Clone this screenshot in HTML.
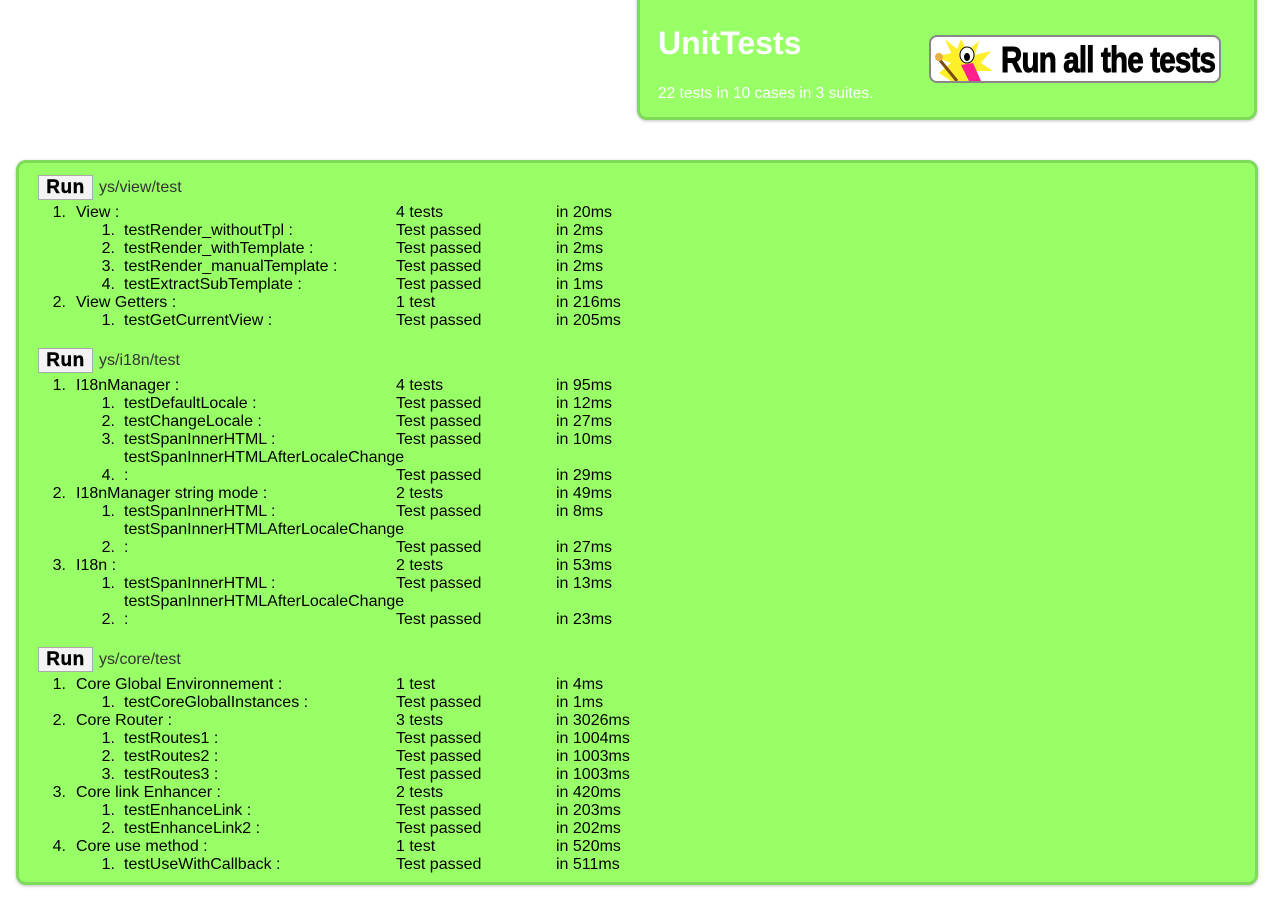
<!DOCTYPE html>
<html><head><meta charset="utf-8"><style>
body{margin:0;width:1273px;height:898px;background:#fff;font-family:"Liberation Sans",sans-serif;position:relative;overflow:hidden;color:#000}
.hdr{position:absolute;left:637px;top:-12px;width:614px;height:126px;background:#99ff66;border:3px solid #7fd95a;border-radius:10px;box-shadow:0 1px 3px rgba(0,0,0,.25)}
.hdr h1{position:absolute;left:18px;top:34px;margin:0;color:#fff;font-size:32px;font-weight:bold}
.hdr .s{position:absolute;left:18px;top:94px;color:#fff;font-size:15.5px}
.btn{position:absolute;left:929px;top:35px;width:288px;height:44px;background:#fff;border:2px solid #888;border-radius:8px;overflow:hidden}
.btn .t{position:absolute;left:70px;top:2px;font-size:36px;font-weight:bold;font-family:"Liberation Sans Narrow","Liberation Sans",sans-serif;transform:scaleX(.82);transform-origin:left;letter-spacing:-1px;white-space:nowrap;-webkit-text-stroke:1px #000}
.main{position:absolute;left:16px;top:160px;width:1236px;height:719px;background:#99ff66;border:3px solid #7fd95a;border-radius:10px;box-shadow:0 1px 3px rgba(0,0,0,.25)}
.run{position:absolute;left:38px;width:53px;height:23px;background:#f3f3f3;border:1px solid #aaa;font-weight:bold;font-size:19px;text-align:center;line-height:24px;letter-spacing:0.5px;-webkit-text-stroke:0.4px #000}
.p{position:absolute;left:99px;font-size:16px;color:#333;line-height:26px}
.r{position:absolute;left:0;height:18px;line-height:18px;font-size:16px;white-space:nowrap;width:800px}
.r span{position:absolute}
.n1{left:40px;width:26px;text-align:right}.t1{left:76px}
.n2{left:89px;width:26px;text-align:right}.t2{left:124px}
.c2{left:396px}.c3{left:556px}
</style></head><body>
<div class="hdr"><h1>UnitTests</h1><div class="s">22 tests in 10 cases in 3 suites.</div></div>
<div class="btn">
<svg width="70" height="44" style="position:absolute;left:0;top:0"><polygon points="30,2 36,14 48,4 44,18 60,14 50,26 62,34 46,34 40,44 20,44 8,36 20,26 4,20 20,16 14,2 26,12" fill="#ffef2a"/><line x1="8" y1="22" x2="26" y2="44" stroke="#7a4a10" stroke-width="3"/><circle cx="8" cy="20" r="4" fill="#e8b040"/><path d="M30 28 L38 44 L50 44 L42 26Z" fill="#ff1e8c"/><ellipse cx="36" cy="18" rx="7" ry="8" fill="#fff" stroke="#000"/><ellipse cx="36" cy="20" rx="3" ry="4" fill="#000"/></svg>
<div class="t">Run all the tests</div></div>
<div class="main"></div>

<div class="run" style="top:175px">Run</div><div class="p" style="top:175px">ys/view/test</div>
<div class="r" style="top:204px"><span class="n1">1.</span><span class="t1">View :</span><span class="c2">4 tests</span><span class="c3">in 20ms</span></div>
<div class="r" style="top:222px"><span class="n2">1.</span><span class="t2">testRender_withoutTpl :</span><span class="c2">Test passed</span><span class="c3">in 2ms</span></div>
<div class="r" style="top:240px"><span class="n2">2.</span><span class="t2">testRender_withTemplate :</span><span class="c2">Test passed</span><span class="c3">in 2ms</span></div>
<div class="r" style="top:258px"><span class="n2">3.</span><span class="t2">testRender_manualTemplate :</span><span class="c2">Test passed</span><span class="c3">in 2ms</span></div>
<div class="r" style="top:276px"><span class="n2">4.</span><span class="t2">testExtractSubTemplate :</span><span class="c2">Test passed</span><span class="c3">in 1ms</span></div>
<div class="r" style="top:294px"><span class="n1">2.</span><span class="t1">View Getters :</span><span class="c2">1 test</span><span class="c3">in 216ms</span></div>
<div class="r" style="top:312px"><span class="n2">1.</span><span class="t2">testGetCurrentView :</span><span class="c2">Test passed</span><span class="c3">in 205ms</span></div>

<div class="run" style="top:348px">Run</div><div class="p" style="top:348px">ys/i18n/test</div>
<div class="r" style="top:377px"><span class="n1">1.</span><span class="t1">I18nManager :</span><span class="c2">4 tests</span><span class="c3">in 95ms</span></div>
<div class="r" style="top:395px"><span class="n2">1.</span><span class="t2">testDefaultLocale :</span><span class="c2">Test passed</span><span class="c3">in 12ms</span></div>
<div class="r" style="top:413px"><span class="n2">2.</span><span class="t2">testChangeLocale :</span><span class="c2">Test passed</span><span class="c3">in 27ms</span></div>
<div class="r" style="top:431px"><span class="n2">3.</span><span class="t2">testSpanInnerHTML :</span><span class="c2">Test passed</span><span class="c3">in 10ms</span></div>
<div class="r" style="top:449px"><span class="t2">testSpanInnerHTMLAfterLocaleChange</span></div>
<div class="r" style="top:467px"><span class="n2">4.</span><span class="t2">:</span><span class="c2">Test passed</span><span class="c3">in 29ms</span></div>
<div class="r" style="top:485px"><span class="n1">2.</span><span class="t1">I18nManager string mode :</span><span class="c2">2 tests</span><span class="c3">in 49ms</span></div>
<div class="r" style="top:503px"><span class="n2">1.</span><span class="t2">testSpanInnerHTML :</span><span class="c2">Test passed</span><span class="c3">in 8ms</span></div>
<div class="r" style="top:521px"><span class="t2">testSpanInnerHTMLAfterLocaleChange</span></div>
<div class="r" style="top:539px"><span class="n2">2.</span><span class="t2">:</span><span class="c2">Test passed</span><span class="c3">in 27ms</span></div>
<div class="r" style="top:557px"><span class="n1">3.</span><span class="t1">I18n :</span><span class="c2">2 tests</span><span class="c3">in 53ms</span></div>
<div class="r" style="top:575px"><span class="n2">1.</span><span class="t2">testSpanInnerHTML :</span><span class="c2">Test passed</span><span class="c3">in 13ms</span></div>
<div class="r" style="top:593px"><span class="t2">testSpanInnerHTMLAfterLocaleChange</span></div>
<div class="r" style="top:611px"><span class="n2">2.</span><span class="t2">:</span><span class="c2">Test passed</span><span class="c3">in 23ms</span></div>

<div class="run" style="top:647px">Run</div><div class="p" style="top:647px">ys/core/test</div>
<div class="r" style="top:676px"><span class="n1">1.</span><span class="t1">Core Global Environnement :</span><span class="c2">1 test</span><span class="c3">in 4ms</span></div>
<div class="r" style="top:694px"><span class="n2">1.</span><span class="t2">testCoreGlobalInstances :</span><span class="c2">Test passed</span><span class="c3">in 1ms</span></div>
<div class="r" style="top:712px"><span class="n1">2.</span><span class="t1">Core Router :</span><span class="c2">3 tests</span><span class="c3">in 3026ms</span></div>
<div class="r" style="top:730px"><span class="n2">1.</span><span class="t2">testRoutes1 :</span><span class="c2">Test passed</span><span class="c3">in 1004ms</span></div>
<div class="r" style="top:748px"><span class="n2">2.</span><span class="t2">testRoutes2 :</span><span class="c2">Test passed</span><span class="c3">in 1003ms</span></div>
<div class="r" style="top:766px"><span class="n2">3.</span><span class="t2">testRoutes3 :</span><span class="c2">Test passed</span><span class="c3">in 1003ms</span></div>
<div class="r" style="top:784px"><span class="n1">3.</span><span class="t1">Core link Enhancer :</span><span class="c2">2 tests</span><span class="c3">in 420ms</span></div>
<div class="r" style="top:802px"><span class="n2">1.</span><span class="t2">testEnhanceLink :</span><span class="c2">Test passed</span><span class="c3">in 203ms</span></div>
<div class="r" style="top:820px"><span class="n2">2.</span><span class="t2">testEnhanceLink2 :</span><span class="c2">Test passed</span><span class="c3">in 202ms</span></div>
<div class="r" style="top:838px"><span class="n1">4.</span><span class="t1">Core use method :</span><span class="c2">1 test</span><span class="c3">in 520ms</span></div>
<div class="r" style="top:856px"><span class="n2">1.</span><span class="t2">testUseWithCallback :</span><span class="c2">Test passed</span><span class="c3">in 511ms</span></div>
</body></html>
